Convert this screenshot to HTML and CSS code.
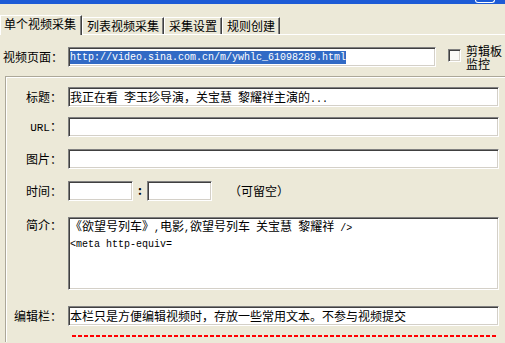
FILE: index.html
```html
<!DOCTYPE html>
<html lang="zh">
<head>
<meta charset="utf-8">
<title>视频采集</title>
<link rel="stylesheet" href="styles.css">
</head>
<body>
<div class="topbar"><div class="tbbtn"></div></div>
<div class="tabs">
  <div class="tab sel">单个视频采集</div>
  <div class="tab">列表视频采集</div>
  <div class="tab">采集设置</div>
  <div class="tab">规则创建</div>
</div>
<div class="panel">
  <div class="pagerow">
    <span class="plabel">视频页面：</span>
    <div class="field urlfield"><span class="hl asc">http://video.sina.com.cn/m/ywhlc_61098289.html</span></div>
    <span class="check"></span>
    <span class="clabel"><span class="cl">剪辑板</span><span class="cl">监控</span></span>
  </div>
  <div class="group">
    <div class="row">
      <span class="label">标题：</span>
      <div class="field wide">我正在看<span class="asc"> </span>李玉珍导演，关宝慧<span class="asc"> </span>黎耀祥主演的<span class="asc">...</span></div>
    </div>
    <div class="row r-url">
      <span class="label"><span class="asc big">URL</span>：</span>
      <div class="field wide"></div>
    </div>
    <div class="row r-img">
      <span class="label">图片：</span>
      <div class="field wide"></div>
    </div>
    <div class="row r-time">
      <span class="label">时间：</span>
      <div class="field short"></div>
      <span class="sep">:</span>
      <div class="field short"></div>
      <span class="note">（可留空）</span>
    </div>
    <div class="row r-intro">
      <span class="label">简介：</span>
      <div class="field wide area">《欲望号列车》<span class="asc">,</span>电影<span class="asc">,</span>欲望号列车<span class="asc"> </span>关宝慧<span class="asc"> </span>黎耀祥<span class="asc"> /&gt;</span><br><span class="asc">&lt;meta http-equiv=</span></div>
    </div>
    <div class="row r-edit">
      <span class="label">编辑栏：</span>
      <div class="field wide">本栏只是方便编辑视频时，存放一些常用文本。不参与视频提交</div>
    </div>
    <div class="dash"></div>
  </div>
</div>
</body>
</html>
```
FILE: styles.css
```css
html, body {
  margin: 0;
  padding: 0;
}
body {
  width: 505px;
  height: 343px;
  overflow: hidden;
  background: #ece9d8;
  color: #000;
  font-family: "Noto Sans CJK SC", "Noto Sans", sans-serif;
  font-size: 12px;
  line-height: 16px;
}
.asc {
  font-family: "Liberation Mono", monospace;
  font-size: 10px;
  white-space: pre;
}
.asc.big {
  font-size: 11px;
}
.topbar {
  height: 4px;
  background: #1d5bd6;
  display: flex;
}
.tbbtn {
  margin-left: auto;
  margin-right: 10px;
  width: 18px;
  height: 2px;
  border: 1px solid #fff;
  border-top: none;
  border-radius: 0 0 3px 3px;
}
.tabs {
  display: flex;
  align-items: flex-start;
  height: 19px;
  margin-top: 11px;
}
.tab {
  box-sizing: border-box;
  margin-top: 2px;
  height: 17px;
  padding: 0 4px;
  border-left: 1px solid #fff;
  border-top: 1px solid #fff;
  border-right: 1px solid #404040;
  box-shadow: inset -1px 0 #808080;
  background: #ece9d8;
  white-space: nowrap;
}
.tab.sel {
  position: relative;
  z-index: 1;
  margin-top: 0;
  height: 20px;
  padding: 0 5px 0 3px;
}
.panel {
  border-top: 1px solid #fff;
}
.pagerow {
  display: flex;
  align-items: center;
  height: 26px;
  margin-top: 9px;
  padding-left: 3px;
}
.plabel {
  width: 65px;
  white-space: nowrap;
}
.field {
  box-sizing: border-box;
  height: 20px;
  background: #fff;
  border: 1px solid;
  border-color: #808080 #fff #fff #808080;
  box-shadow: inset 1px 1px #404040, inset -1px -1px #d4d0c8;
  padding: 1px 2px 0 1px;
  white-space: nowrap;
  overflow: hidden;
}
.urlfield {
  width: 368px;
  display: flex;
  align-items: center;
  padding: 0 0 0 1px;
}
.hl {
  display: inline-block;
  height: 13px;
  line-height: 13px;
  background: #316ac5;
  color: #fff;
}
.check {
  box-sizing: border-box;
  width: 13px;
  height: 13px;
  margin-left: 12px;
  margin-top: -3px;
  background: #fbfaf6;
  border: 1px solid;
  border-color: #808080 #fff #fff #808080;
  box-shadow: inset 1px 1px #404040, inset -1px -1px #d4d0c8;
}
.clabel {
  margin-left: 5px;
  display: flex;
  flex-direction: column;
  white-space: nowrap;
}
.cl {
  display: block;
  height: 13px;
  font-size: 12px;
  line-height: 13px;
  overflow: visible;
}
.group {
  box-sizing: border-box;
  margin-top: 6px;
  margin-left: 5px;
  width: 500px;
  height: 266px;
  border-top: 1px solid #aca899;
  border-left: 1px solid #aca899;
  box-shadow: inset 1px 1px #fff;
  padding-top: 10px;
}
.row {
  display: flex;
  align-items: center;
  height: 20px;
}
.label {
  box-sizing: border-box;
  width: 62px;
  padding-right: 6px;
  text-align: right;
  white-space: nowrap;
}
.wide {
  width: 431px;
}
.short {
  width: 65px;
}
.sep {
  width: 14px;
  text-align: center;
  font-weight: bold;
  margin-top: -2px;
}
.note {
  margin-left: 17px;
}
.r-url { margin-top: 10px; }
.r-img { margin-top: 12px; }
.r-time { margin-top: 12px; }
.r-intro {
  margin-top: 16px;
  height: 73px;
  align-items: flex-start;
}
.r-intro .label {
  padding-top: 1px;
  line-height: 13px;
}
.area {
  height: 73px;
  line-height: 13px;
  padding: 1px 2px 0 1px;
}
.r-edit { margin-top: 16px; }
.dash {
  margin-top: 9px;
  margin-left: 66px;
  width: 424px;
  height: 2px;
  background: repeating-linear-gradient(90deg, #f00 0 4px, transparent 4px 6px);
}
```
